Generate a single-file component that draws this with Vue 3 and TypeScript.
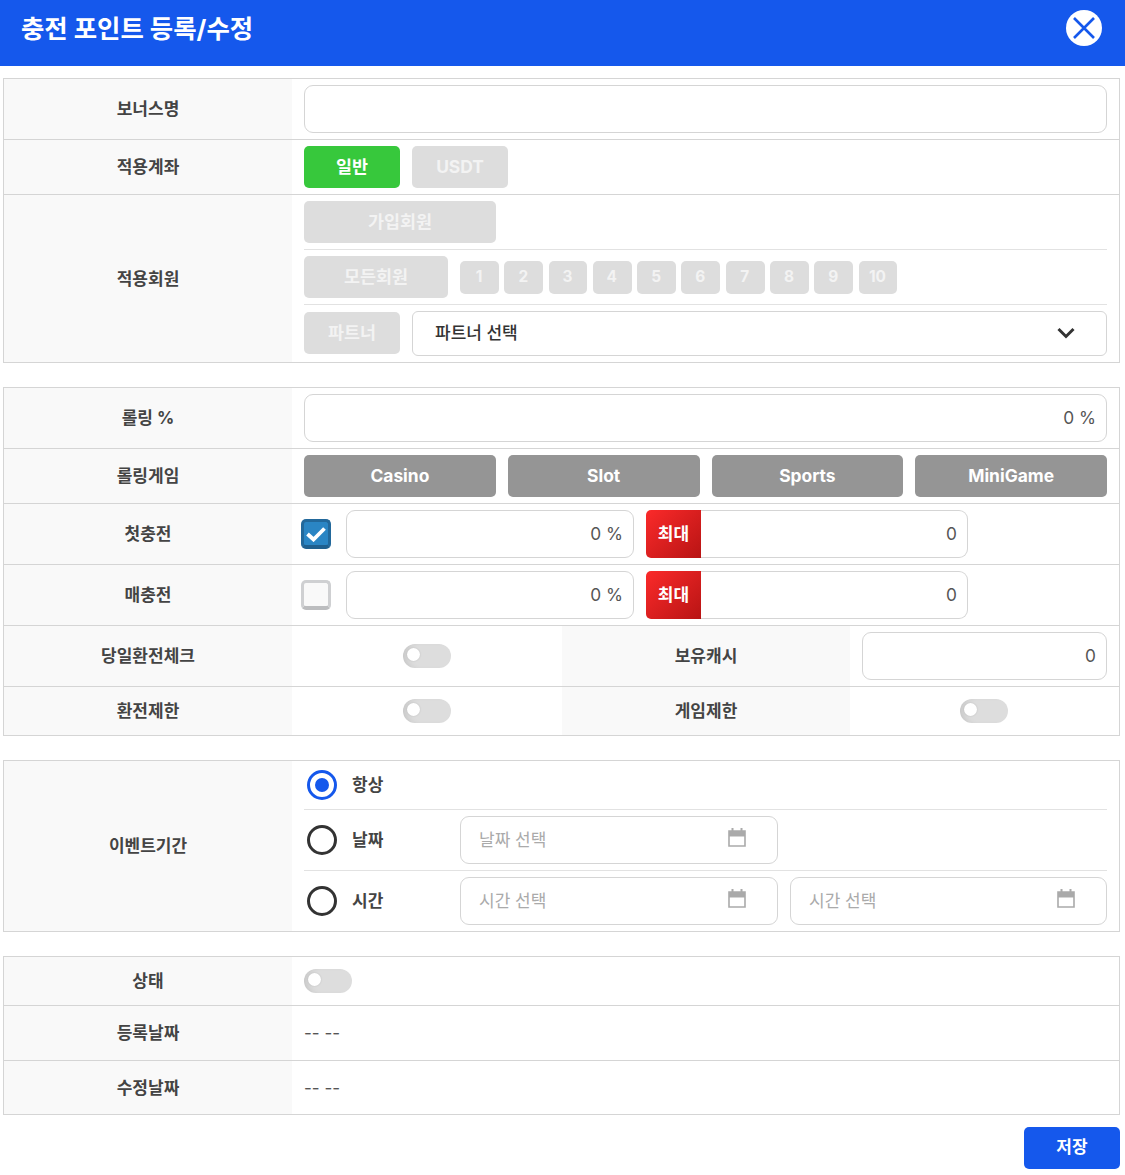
<script setup lang="ts">
const levels: number[] = [1, 2, 3, 4, 5, 6, 7, 8, 9, 10]
const games: string[] = ['Casino', 'Slot', 'Sports', 'MiniGame']
</script>

<template>
  <div class="page">
    <header class="head">
      <h1>충전 포인트 등록/수정</h1>
      <button class="close" type="button" aria-label="닫기">
        <svg width="36" height="36" viewBox="0 0 36 36">
          <circle cx="18" cy="18" r="18" fill="#fff" />
          <path d="M8 8 L28 28 M28 8 L8 28" stroke="#1558ec" stroke-width="2.6" fill="none" />
        </svg>
      </button>
    </header>

    <main class="body">
      <section class="table">
        <div class="row">
          <div class="label">보너스명</div>
          <div class="cell"><div class="input"></div></div>
        </div>
        <div class="row">
          <div class="label">적용계좌</div>
          <div class="cell">
            <span class="btn w96 green">일반</span>
            <span class="btn w96 off">USDT</span>
          </div>
        </div>
        <div class="row">
          <div class="label">적용회원</div>
          <div class="cell stack">
            <div class="sub"><span class="btn w192 off">가입회원</span></div>
            <div class="sub">
              <span class="btn w144 off">모든회원</span>
              <div class="levels">
                <span v-for="n in levels" :key="n" class="level">{{ n }}</span>
              </div>
            </div>
            <div class="sub partner">
              <span class="btn w96 off">파트너</span>
              <div class="select">
                <span>파트너 선택</span>
                <svg width="18" height="12" viewBox="0 0 18 12">
                  <path d="M1.5 2 L9 9.5 L16.5 2" stroke="#333" stroke-width="3" fill="none" />
                </svg>
              </div>
            </div>
          </div>
        </div>
      </section>

      <section class="table">
        <div class="row">
          <div class="label">롤링 %</div>
          <div class="cell"><div class="input num">0 %</div></div>
        </div>
        <div class="row">
          <div class="label">롤링게임</div>
          <div class="cell games">
            <span v-for="g in games" :key="g" class="btn gray">{{ g }}</span>
          </div>
        </div>
        <div class="row">
          <div class="label">첫충전</div>
          <div class="cell wide">
            <span class="check on">
              <svg width="20" height="16" viewBox="0 0 20 16">
                <path d="M1.5 8 L7.5 13.5 L18.5 2.5" stroke="#fff" stroke-width="3.8" fill="none" />
              </svg>
            </span>
            <div class="input num pct">0 %</div>
            <div class="maxbox"><span class="max">최대</span><div class="maxval">0</div></div>
          </div>
        </div>
        <div class="row">
          <div class="label">매충전</div>
          <div class="cell wide">
            <span class="check"></span>
            <div class="input num pct">0 %</div>
            <div class="maxbox"><span class="max">최대</span><div class="maxval">0</div></div>
          </div>
        </div>
        <div class="row">
          <div class="label">당일환전체크</div>
          <div class="half"><span class="toggle"></span></div>
          <div class="label">보유캐시</div>
          <div class="half end"><div class="input num">0</div></div>
        </div>
        <div class="row tall">
          <div class="label">환전제한</div>
          <div class="half"><span class="toggle"></span></div>
          <div class="label">게임제한</div>
          <div class="half end center"><span class="toggle"></span></div>
        </div>
      </section>

      <section class="table">
        <div class="row">
          <div class="label">이벤트기간</div>
          <div class="cell stack">
            <div class="sub first">
              <span class="radio on"></span>
              <span class="rlabel">항상</span>
            </div>
            <div class="sub">
              <span class="radio"></span>
              <span class="rlabel">날짜</span>
              <div class="date"><span>날짜 선택</span>
                <svg width="18" height="19" viewBox="0 0 18 19">
                  <path d="M1 3 H17 V8.5 H1 Z" fill="#aaa" />
                  <path d="M4.5 0 V3 M13.5 0 V3" stroke="#aaa" stroke-width="2" />
                  <path d="M1 3 H17 V18 H1 Z" stroke="#aaa" stroke-width="1.6" fill="none" />
                </svg>
              </div>
            </div>
            <div class="sub">
              <span class="radio"></span>
              <span class="rlabel">시간</span>
              <div class="date"><span>시간 선택</span>
                <svg width="18" height="19" viewBox="0 0 18 19">
                  <path d="M1 3 H17 V8.5 H1 Z" fill="#aaa" />
                  <path d="M4.5 0 V3 M13.5 0 V3" stroke="#aaa" stroke-width="2" />
                  <path d="M1 3 H17 V18 H1 Z" stroke="#aaa" stroke-width="1.6" fill="none" />
                </svg>
              </div>
              <div class="date second"><span>시간 선택</span>
                <svg width="18" height="19" viewBox="0 0 18 19">
                  <path d="M1 3 H17 V8.5 H1 Z" fill="#aaa" />
                  <path d="M4.5 0 V3 M13.5 0 V3" stroke="#aaa" stroke-width="2" />
                  <path d="M1 3 H17 V18 H1 Z" stroke="#aaa" stroke-width="1.6" fill="none" />
                </svg>
              </div>
            </div>
          </div>
        </div>
      </section>

      <section class="table">
        <div class="row tall">
          <div class="label">상태</div>
          <div class="cell"><span class="toggle"></span></div>
        </div>
        <div class="row h54">
          <div class="label">등록날짜</div>
          <div class="cell text">-- --</div>
        </div>
        <div class="row h53">
          <div class="label">수정날짜</div>
          <div class="cell text">-- --</div>
        </div>
      </section>

      <div class="foot"><button class="save" type="button">저장</button></div>
    </main>
  </div>
</template>

<style>
body { margin: 0; background: #fff; }
</style>

<style scoped>
.page {
  width: 1125px;
  font-family: Inter, "Noto Sans CJK KR", sans-serif;
  color: #444;
  font-size: 17px;
  line-height: 24px;
  box-sizing: border-box;
}
.page * { box-sizing: border-box; }

.head {
  height: 66px;
  background: #1558ec;
  display: flex;
  align-items: center;
  justify-content: space-between;
  padding: 0 23px 10px 21px;
}
.head h1 {
  margin: 2px 0 0;
  color: #fff;
  font-size: 25.4px;
  font-weight: 700;
  line-height: 36px;
}
.close {
  width: 36px;
  height: 36px;
  padding: 0;
  border: 0;
  background: none;
  display: block;
}
.close svg { display: block; }

.body { padding: 12px 5px 0 3px; }

.table {
  border: 1px solid #d5d5d5;
  margin-bottom: 24px;
}
.table:nth-of-type(4) { margin-bottom: 12px; }

.row {
  display: flex;
  border-bottom: 1px solid #d5d5d5;
}
.row:last-child { border-bottom: 0; }
.row.tall { height: 49px; }
.row.tall:last-child { height: 48px; }
.row.h54 { height: 55px; }
.row.h53 { height: 53px; }

.label {
  flex: 0 0 288px;
  background: #f9f9f9;
  display: flex;
  align-items: center;
  justify-content: center;
  font-weight: 700;
  color: #444;
}

.cell {
  flex: 1;
  min-width: 0;
  padding: 6px 12px;
  display: flex;
  align-items: center;
  gap: 12px;
}
.cell.stack {
  display: block;
  padding: 0 12px;
}
.cell.wide { gap: 0; }
.cell.text {
  font-size: 17px;
  color: #555;
  font-weight: 400;
}

.sub {
  display: flex;
  align-items: center;
  gap: 12px;
  padding: 6px 0;
  border-bottom: 1px solid #e2e2e2;
}
.sub:last-child { border-bottom: 0; }
.sub.first { height: 49px; padding: 0; }
.partner { align-items: flex-start; }
.partner .btn { margin-top: 1px; }

.input {
  width: 100%;
  height: 48px;
  border: 1px solid #d5d5d5;
  border-radius: 9px;
  background: #fff;
}
.num {
  display: flex;
  align-items: center;
  justify-content: flex-end;
  padding-right: 10px;
  font-size: 17.3px;
  color: #555;
}
.pct {
  flex: 0 0 288px;
  width: 288px;
}

.btn {
  display: flex;
  align-items: center;
  justify-content: center;
  height: 42px;
  border-radius: 5px;
  font-weight: 700;
  font-size: 17.4px;
  color: #fff;
}
.w96 { width: 96px; }
.w144 { width: 144px; }
.w192 { width: 192px; }
.green { background: #37c83c; }
.off { background: #dddddd; color: #f3f3f3; }
.gray { background: #959595; }

.games {
  display: grid;
  grid-template-columns: repeat(4, 1fr);
  gap: 12px;
}

.levels {
  display: flex;
  gap: 5.4px;
}
.level {
  width: 38.9px;
  height: 33px;
  border-radius: 5px;
  background: #dddddd;
  color: #f3f3f3;
  font-weight: 700;
  font-size: 15.4px;
  display: flex;
  align-items: center;
  justify-content: center;
  padding-right: 1px;
}

.select {
  flex: 1;
  height: 45px;
  border: 1px solid #d5d5d5;
  border-radius: 6px;
  display: flex;
  align-items: center;
  justify-content: space-between;
  padding: 0 31px 1px 22px;
  font-weight: 500;
  color: #333;
}

.check {
  flex: 0 0 30px;
  width: 30px;
  height: 30px;
  margin: 0 15px 0 -3px;
  border-radius: 5px;
  background: #f9f9f9;
  border: 3px solid #cfd0d2;
  border-bottom: 4px solid #bcbdbf;
}
.check.on {
  background: #2a85c4;
  border-color: #22689b;
  border-bottom-color: #1f5f8e;
  display: flex;
  align-items: center;
  justify-content: center;
}

.maxbox {
  flex: 0 0 322px;
  display: flex;
  height: 48px;
  margin-left: 12px;
}
.max {
  flex: 0 0 55px;
  background: linear-gradient(135deg, #fb2a2a, #b81414);
  border-radius: 5px 0 0 5px;
  color: #fff;
  font-weight: 700;
  display: flex;
  align-items: center;
  justify-content: center;
}
.maxval {
  flex: 1;
  border: 1px solid #d5d5d5;
  border-left: 0;
  border-radius: 0 9px 9px 0;
  display: flex;
  align-items: center;
  justify-content: flex-end;
  padding-right: 10px;
  font-size: 17.3px;
  color: #555;
}

.half {
  flex: 0 0 270px;
  display: flex;
  align-items: center;
  justify-content: center;
}
.half.end {
  flex: 1;
  min-width: 0;
  padding: 6px 12px;
}
.half.center { padding: 0 1px 0 0; }

.toggle {
  position: relative;
  display: block;
  width: 48px;
  height: 24px;
  border-radius: 12px;
  background: #dddddd;
  box-shadow: inset 7px 0 6px -4px rgba(0, 0, 0, 0.1);
}
.toggle::after {
  content: "";
  position: absolute;
  left: 4px;
  top: 4px;
  width: 13px;
  height: 13px;
  border-radius: 50%;
  background: #fff;
  box-shadow: 0 0 2px rgba(0, 0, 0, 0.15);
}

.radio {
  position: relative;
  flex: 0 0 30px;
  width: 30px;
  height: 30px;
  margin-left: 3px;
  border-radius: 50%;
  border: 3px solid #333;
  background: #fff;
}
.radio.on { border-color: #1558ec; }
.radio.on::after {
  content: "";
  position: absolute;
  left: 5px;
  top: 5px;
  width: 14px;
  height: 14px;
  border-radius: 50%;
  background: #1558ec;
}
.rlabel {
  flex: 0 0 96px;
  font-weight: 700;
  color: #444;
  margin-left: 3px;
}

.date {
  flex: 0 0 318px;
  width: 318px;
  height: 48px;
  border: 1px solid #d5d5d5;
  border-radius: 9px;
  display: flex;
  align-items: center;
  justify-content: space-between;
  padding: 0 31px 0 18px;
  color: #aaa;
  font-size: 17px;
}
.date svg { margin-bottom: 5px; }
.date.second { flex: 0 0 317px; width: 317px; }

.foot {
  display: flex;
  justify-content: flex-end;
}
.save {
  width: 96px;
  height: 42px;
  padding: 0 0 2px;
  border: 0;
  border-radius: 5px;
  background: #1558ec;
  color: #fff;
  font-family: inherit;
  font-size: 17px;
  line-height: 24px;
  font-weight: 700;
}
</style>
